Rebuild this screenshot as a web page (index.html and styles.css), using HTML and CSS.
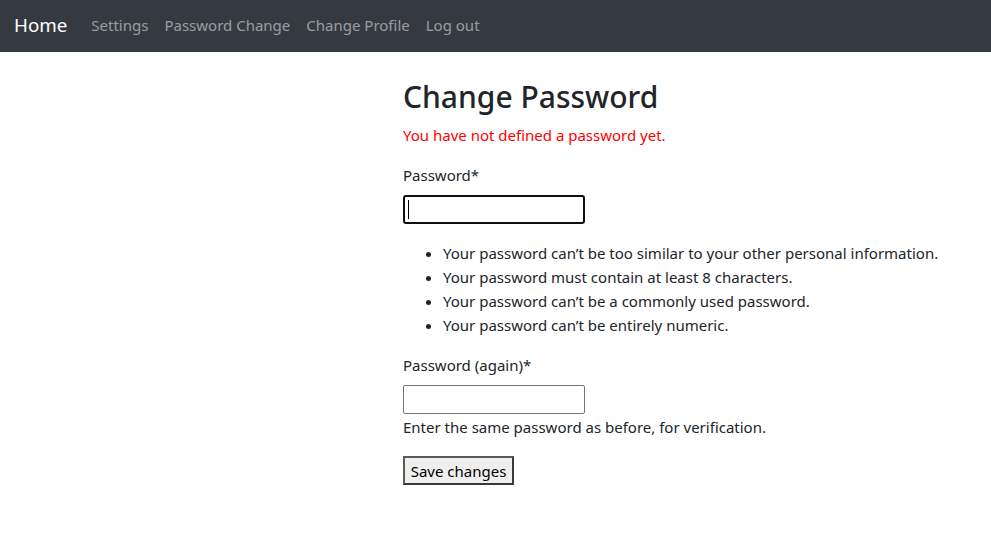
FILE: index.html
```html
<!DOCTYPE html>
<html lang="en">
<head>
<meta charset="utf-8">
<title>Change Password</title>
<link rel="stylesheet" href="styles.css">
</head>
<body>
<nav class="navbar">
  <a class="brand" href="#">Home</a>
  <ul class="nav">
    <li><a class="nav-link" href="#">Settings</a></li>
    <li><a class="nav-link" href="#">Password Change</a></li>
    <li><a class="nav-link" href="#">Change Profile</a></li>
    <li><a class="nav-link" href="#">Log out</a></li>
  </ul>
</nav>
<main class="main">
  <h2 class="title">Change Password</h2>
  <p class="error">You have not defined a password yet.</p>
  <form class="form">
    <label class="label" for="p1">Password*</label>
    <div class="field">
      <input class="input input-focus" id="p1" type="password">
      <span class="caret"></span>
    </div>
    <ul class="help-list">
      <li>Your password can’t be too similar to your other personal information.</li>
      <li>Your password must contain at least 8 characters.</li>
      <li>Your password can’t be a commonly used password.</li>
      <li>Your password can’t be entirely numeric.</li>
    </ul>
    <label class="label" for="p2">Password (again)*</label>
    <div class="field">
      <input class="input" id="p2" type="password">
    </div>
    <div class="help">Enter the same password as before, for verification.</div>
    <button class="btn" type="button">Save changes</button>
  </form>
</main>
</body>
</html>
```
FILE: styles.css
```css
*{box-sizing:border-box;}
body{
  margin:0;
  font-family:"Noto Sans","Open Sans",sans-serif;
  font-size:15px;
  line-height:24px;
  color:#212529;
  background:#fff;
}
.navbar{
  display:flex;
  align-items:center;
  height:52px;
  padding:0 16px 3px 14px;
  background:#343a40;
}
.brand{
  font-size:18.75px;
  line-height:30px;
  color:#fff;
  text-decoration:none;
  margin-right:16px;
}
.nav{
  display:flex;
  list-style:none;
  margin:0;
  padding:0;
}
.nav-link{
  display:block;
  padding:0 8px;
  color:rgba(255,255,255,.5);
  text-decoration:none;
  line-height:24px;
}
.main{
  padding:27px 0 0 403px;
}
.title{
  margin:0 0 8px;
  font-size:30px;
  line-height:36px;
  font-weight:500;
}
.error{
  margin:0 0 16px;
  color:#ff0000;
}
.form{margin:0;}
.label{
  display:block;
  margin-bottom:8px;
}
.field{
  position:relative;
  width:182px;
  height:29px;
}
.input{
  display:block;
  width:182px;
  height:29px;
  margin:0;
  padding:0 4px;
  border:1px solid #767676;
  border-radius:2px;
  background:#fff;
  font:inherit;
  outline:none;
}
.input-focus{
  border:2px solid #101010;
  border-radius:3px;
}
.caret{
  position:absolute;
  left:5px;
  top:5px;
  width:1px;
  height:19px;
  background:#000;
}
.help-list{
  margin:17px 0 16px;
  padding-left:40px;
}
.help-list li{line-height:24px;}
.help{
  margin-top:1px;
}
.btn{
  display:block;
  margin-top:17px;
  width:111px;
  height:29px;
  padding:0;
  border:2px solid #3a3a3a;
  border-top-color:#5a5a5a;
  border-left-color:#5a5a5a;
  background:#efefef;
  font:inherit;
  color:#000;
}
```
